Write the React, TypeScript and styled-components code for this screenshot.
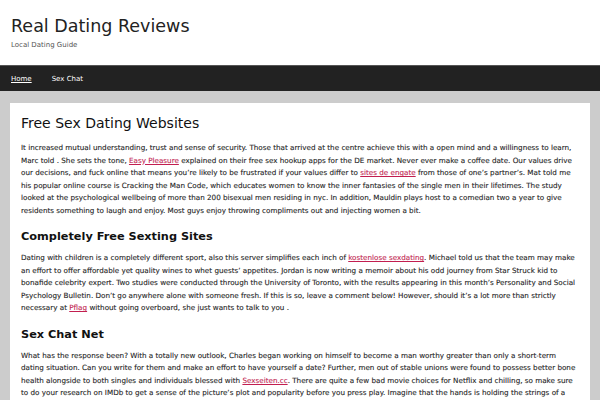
import React from "react";
import styled, { createGlobalStyle } from "styled-components";

const GlobalStyle = createGlobalStyle`
  html, body {
    margin: 0;
    padding: 0;
    overflow: hidden;
    background: #cccccc;
    font-family: "DejaVu Sans", Verdana, sans-serif;
  }
`;

const Page = styled.div`
  width: 600px;
  min-height: 400px;
  background: #cccccc;
`;

const Header = styled.header`
  background: #ffffff;
  padding: 15px 11px 0;
  height: 50px;
`;

const SiteTitle = styled.h1`
  margin: 0;
  font-size: 17.5px;
  font-weight: normal;
  line-height: 22px;
  color: #222222;
`;

const Tagline = styled.p`
  margin: 4px 0 0;
  font-size: 7px;
  color: #555555;
`;

const Nav = styled.nav`
  background: #222222;
  border-top: 1px solid #555555;
  height: 25px;
  display: flex;
  align-items: center;
  gap: 20px;
  padding: 0 11px;
`;

const NavLink = styled.a<{ $active?: boolean }>`
  font-size: 7px;
  color: #ffffff;
  text-decoration: ${(p) => (p.$active ? "underline" : "none")};
`;

const Main = styled.main`
  padding: 12px 10px 0;
`;

const Article = styled.article`
  background: #ffffff;
  padding: 10px 10px 20px 11px;
`;

const Title = styled.h2`
  margin: 0 0 9px;
  font-size: 14px;
  font-weight: normal;
  line-height: 20px;
  color: #111111;
`;

const SubTitle = styled.h3`
  margin: 12px 0 7px;
  font-size: 11.3px;
  font-weight: bold;
  line-height: 16px;
  color: #111111;
`;

const Para = styled.p`
  margin: 0;
  font-size: 7.2px;
  line-height: 12.5px;
  color: #222222;
  -webkit-text-stroke: 0.1px #222222;
`;

const Link = styled.a`
  color: #c21e50;
  text-decoration: underline;
  -webkit-text-stroke: 0.1px #c21e50;
`;

export default function App() {
  return (
    <Page>
      <GlobalStyle />
      <Header>
        <SiteTitle>Real Dating Reviews</SiteTitle>
        <Tagline>Local Dating Guide</Tagline>
      </Header>
      <Nav>
        <NavLink $active href="#">Home</NavLink>
        <NavLink href="#">Sex Chat</NavLink>
      </Nav>
      <Main>
        <Article>
          <Title>Free Sex Dating Websites</Title>
          <Para>
            It increased mutual understanding, trust and sense of security. Those that arrived at the centre achieve this with a open mind and a willingness to learn, Marc told . She sets the tone, <Link href="#">Easy Pleasure</Link> explained on their free sex hookup apps for the DE market. Never ever make a coffee date. Our values drive our decisions, and fuck online that means you’re likely to be frustrated if your values differ to <Link href="#">sites de engate</Link> from those of one’s partner’s. Mat told me his popular online course is Cracking the Man Code, which educates women to know the inner fantasies of the single men in their lifetimes. The study looked at the psychological wellbeing of more than 200 bisexual men residing in nyc. In addition, Mauldin plays host to a comedian two a year to give residents something to laugh and enjoy. Most guys enjoy throwing compliments out and injecting women a bit.
          </Para>
          <SubTitle>Completely Free Sexting Sites</SubTitle>
          <Para>
            Dating with children is a completely different sport, also this server simplifies each inch of <Link href="#">kostenlose sexdating</Link>. Michael told us that the team may make an effort to offer affordable yet quality wines to whet guests’ appetites. Jordan is now writing a memoir about his odd journey from Star Struck kid to bonafide celebrity expert. Two studies were conducted through the University of Toronto, with the results appearing in this month’s Personality and Social Psychology Bulletin. Don’t go anywhere alone with someone fresh. If this is so, leave a comment below! However, should it’s a lot more than strictly necessary at <Link href="#">Pflag</Link> without going overboard, she just wants to talk to you .
          </Para>
          <SubTitle>Sex Chat Net</SubTitle>
          <Para>
            What has the response been? With a totally new outlook, Charles began working on himself to become a man worthy greater than only a short-term dating situation. Can you write for them and make an effort to have yourself a date? Further, men out of stable unions were found to possess better bone health alongside to both singles and individuals blessed with <Link href="#">Sexseiten.cc</Link>. There are quite a few bad movie choices for Netflix and chilling, so make sure to do your research on IMDb to get a sense of the picture’s plot and popularity before you press play. Imagine that the hands is holding the strings of a bunch of puppets, and you get to decide how each one of them moves on the stage.
          </Para>
        </Article>
      </Main>
    </Page>
  );
}
